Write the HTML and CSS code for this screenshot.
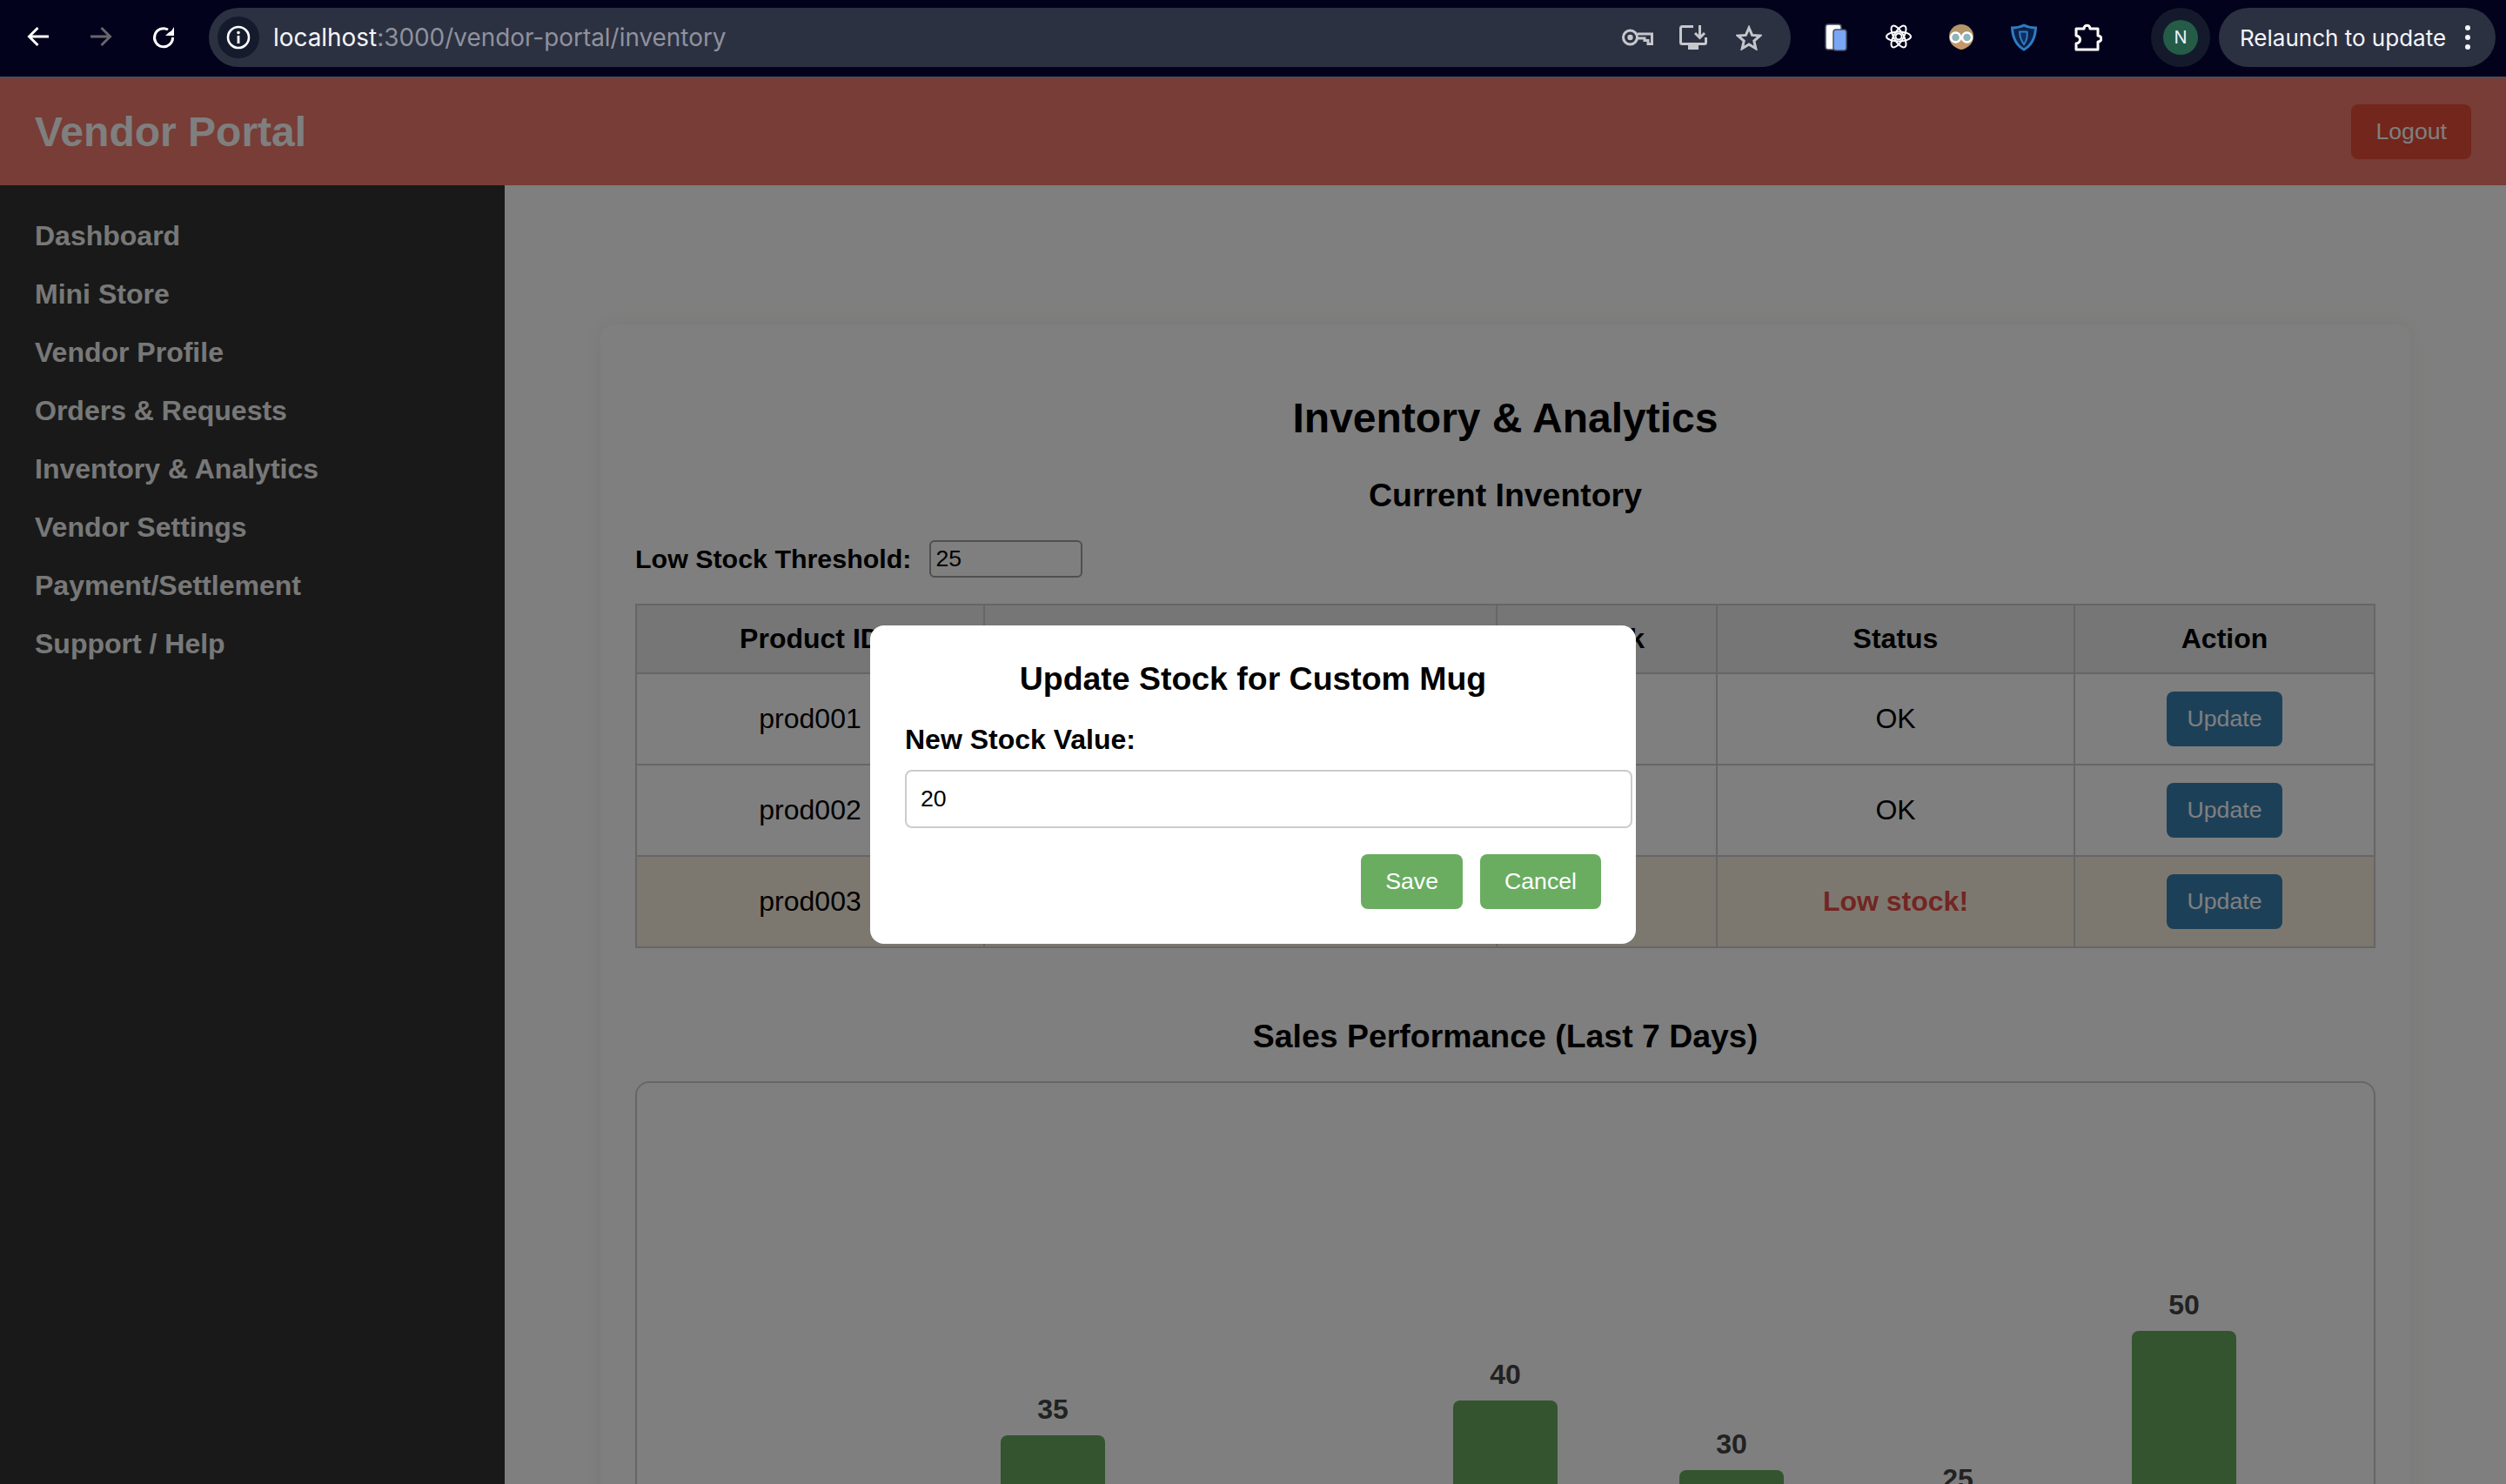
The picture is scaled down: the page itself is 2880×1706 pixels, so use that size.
FILE: index.html
```html
<!DOCTYPE html>
<html lang="en">
<head>
<meta charset="utf-8">
<title>Vendor Portal</title>
<link rel="stylesheet" href="styles.css">
</head>
<body>
<div class="browser-bar">
  <svg class="nav-icon" viewBox="0 0 24 24"><path class="st-white" d="M24 11H1.5M11.5 1L1.5 11L11.5 21"/></svg>
  <svg class="nav-icon" viewBox="0 0 24 24"><path class="st-dim" d="M0 11H22.5M12.5 1L22.5 11L12.5 21"/></svg>
  <svg class="nav-icon" viewBox="0 0 24 24"><path class="st-white" d="M22.5 12A10.5 10.5 0 1 1 17 3"/><path class="fill-white" d="M24 0V10H14L17.5 6.8L21 4.5Z"/></svg>
  <div class="url-bar">
    <span class="info-pill">
      <svg class="info-icon" viewBox="0 0 28 28"><circle class="st-white-thin" cx="14" cy="14" r="12"/><circle class="fill-white" cx="14" cy="8.6" r="1.8"/><rect class="fill-white" x="12.6" y="12" width="2.8" height="9"/></svg>
    </span>
    <span class="url-text"><span class="url-host">localhost</span>:3000/vendor-portal/inventory</span>
    <span class="url-actions">
      <svg class="key-icon" viewBox="0 0 36 20"><circle class="st-gray" cx="9.5" cy="10" r="8"/><circle class="fill-gray" cx="9.5" cy="10" r="3.2"/><path class="st-gray" d="M17.5 6H34.5V17.5H30V13.5H26V11H18"/></svg>
      <svg class="monitor-icon" viewBox="0 0 32 28"><path class="st-gray" d="M16 1.5H3A1.5 1.5 0 0 0 1.500 3V20A1.500 1.500 0 0 0 3 21.500H29A1.500 1.500 0 0 0 30.500 20V14"/><rect class="fill-gray" x="10" y="23" width="12" height="5"/><path class="st-gray" d="M23.500 0V14M18 9L23.500 14.500L29 9"/></svg>
      <svg class="star-icon" viewBox="0 0 30 29"><path class="st-gray" d="M15 3L18.600 11.400L27.500 12.100L20.800 18L22.800 26.700L15 22L7.200 26.700L9.200 18L2.500 12.100L11.400 11.400Z"/></svg>
    </span>
  </div>
  <div class="extensions">
    <svg class="ext" viewBox="0 0 32 32"><rect class="phone-back" x="4" y="1" width="18" height="29" rx="3"/><rect class="phone-front" x="13" y="7" width="15" height="24" rx="3"/></svg>
    <svg class="ext" viewBox="0 0 32 32"><g class="st-atom"><ellipse cx="16" cy="15" rx="14" ry="5.500"/><ellipse cx="16" cy="15" rx="14" ry="5.500" transform="rotate(60 16 15)"/><ellipse cx="16" cy="15" rx="14" ry="5.500" transform="rotate(120 16 15)"/><circle cx="16" cy="15" r="3.500"/></g></svg>
    <svg class="ext" viewBox="0 0 32 32"><circle class="hair" cx="16" cy="15" r="14"/><path class="face" d="M6 16H26C26 25 21 30 16 30C11 30 6 25 6 16Z"/><circle class="lens" cx="9.500" cy="16" r="5.500"/><circle class="lens" cx="22.500" cy="16" r="5.500"/></svg>
    <svg class="ext" viewBox="0 0 32 32"><path class="shield" d="M16 30C7 25 3 16 2.500 5C8 5 12 4 16 2C20 4 24 5 29.500 5C29 16 25 25 16 30Z"/><path class="shield-in" d="M11 9.500H19.500C20.500 15 19 20 16 24C13 20 11 15 11 9.500Z"/></svg>
    <svg class="ext ext-last" viewBox="0 0 32 32"><path class="st-puzzle" d="M2 6H11C11 1 18 1 18 6H27V14C32 14 32 21 27 21V30H2V23C8 22 8 15 2 14Z"/></svg>
  </div>
  <div class="profile-pill"><span class="avatar">N</span></div>
  <div class="relaunch-pill">
    <span class="relaunch-text">Relaunch to update</span>
    <span class="kebab"><i></i><i></i><i></i></span>
  </div>
</div>

<div class="app">
  <header class="top-header">
    <span class="brand">Vendor Portal</span>
    <button class="logout-btn">Logout</button>
  </header>
  <div class="layout">
    <aside class="sidebar">
      <a class="side-link">Dashboard</a>
      <a class="side-link">Mini Store</a>
      <a class="side-link">Vendor Profile</a>
      <a class="side-link">Orders &amp; Requests</a>
      <a class="side-link">Inventory &amp; Analytics</a>
      <a class="side-link">Vendor Settings</a>
      <a class="side-link">Payment/Settlement</a>
      <a class="side-link">Support / Help</a>
    </aside>
    <main class="main">
      <section class="card">
        <h2 class="page-title">Inventory &amp; Analytics</h2>
        <h3 class="section-title">Current Inventory</h3>
        <div class="threshold-row">
          <label class="threshold-label">Low Stock Threshold:</label>
          <input class="threshold-input" type="text" value="25">
        </div>
        <table class="stock-table">
          <colgroup>
            <col class="col-id"><col class="col-name"><col class="col-stock"><col class="col-status"><col class="col-action">
          </colgroup>
          <thead>
            <tr><th>Product ID</th><th>Product Name</th><th>Stock</th><th>Status</th><th>Action</th></tr>
          </thead>
          <tbody>
            <tr><td>prod001</td><td>Custom T-Shirt</td><td>50</td><td>OK</td><td><button class="update-btn">Update</button></td></tr>
            <tr><td>prod002</td><td>Tote Bag</td><td>30</td><td>OK</td><td><button class="update-btn">Update</button></td></tr>
            <tr class="low-row"><td>prod003</td><td>Custom Mug</td><td>20</td><td class="low-text">Low stock!</td><td><button class="update-btn">Update</button></td></tr>
          </tbody>
        </table>
        <h3 class="chart-title">Sales Performance (Last 7 Days)</h3>
        <div class="chart">
          <div class="bar-col"><div class="bar bar-20"></div></div>
          <div class="bar-col"><span class="bar-value">35</span><div class="bar bar-35"></div></div>
          <div class="bar-col"><div class="bar bar-15"></div></div>
          <div class="bar-col"><span class="bar-value">40</span><div class="bar bar-40"></div></div>
          <div class="bar-col"><span class="bar-value">30</span><div class="bar bar-30"></div></div>
          <div class="bar-col"><span class="bar-value">25</span><div class="bar bar-25"></div></div>
          <div class="bar-col"><span class="bar-value">50</span><div class="bar bar-50"></div></div>
        </div>
      </section>
    </main>
  </div>
  <div class="overlay">
    <div class="modal">
      <h3 class="modal-title">Update Stock for Custom Mug</h3>
      <label class="modal-label">New Stock Value:</label>
      <input class="modal-input" type="text" value="20">
      <div class="modal-actions">
        <button class="modal-btn">Save</button>
        <button class="modal-btn">Cancel</button>
      </div>
    </div>
  </div>
</div>
</body>
</html>
```
FILE: styles.css
```css
* { box-sizing: border-box; }
html, body { margin: 0; padding: 0; }
body {
  width: 2880px;
  height: 1706px;
  overflow: hidden;
  background: #000;
  font-family: "Liberation Sans", Arial, sans-serif;
  display: flex;
  flex-direction: column;
}

/* browser chrome */
.browser-bar {
  flex: none;
  height: 90px;
  padding: 0 12px 2px 32px;
  display: flex;
  align-items: center;
  background: #02021c;
  border-bottom: 2px solid #4a4d5a;
  font-family: Inter, "Noto Sans", sans-serif;
}
.nav-icon { width: 24px; height: 24px; margin-right: 48px; flex: none; overflow: visible; }
.nav-icon:nth-of-type(3) { margin-right: 40px; }
.st-white, .st-dim, .st-white-thin, .st-gray, .st-atom, .st-puzzle { fill: none; }
.st-white { stroke: #fff; stroke-width: 3; }
.st-dim { stroke: #66666e; stroke-width: 3; }
.st-white-thin { stroke: #fff; stroke-width: 2.6; }
.st-gray { stroke: #c5c7cb; stroke-width: 3; }
.st-atom { stroke: #fff; stroke-width: 2; }
.st-puzzle { stroke: #fff; stroke-width: 3; stroke-linejoin: round; }
.fill-white { fill: #fff; }
.fill-gray { fill: #c5c7cb; }
.url-bar {
  width: 1818px;
  height: 68px;
  flex: none;
  display: flex;
  align-items: center;
  padding-left: 10px;
  background: #2c3142;
  border-radius: 34px;
}
.info-pill {
  width: 48px;
  height: 48px;
  display: flex;
  align-items: center;
  justify-content: center;
  background: #141b2c;
  border-radius: 50%;
}
.info-icon { width: 28px; height: 28px; }
.url-text { margin-left: 16px; font-size: 27.9px; color: #8f929d; white-space: nowrap; }
.url-host { color: #f5f5f7; }
.url-actions { margin-left: auto; display: flex; align-items: center; }
.key-icon { width: 36px; height: 20px; margin-right: 30px; }
.monitor-icon { width: 32px; height: 28px; margin-right: 33px; }
.star-icon { width: 30px; height: 29px; margin-right: 33px; }
.extensions { margin-left: 36px; display: flex; gap: 40px; flex: none; }
.ext { width: 32px; height: 32px; }
.ext-last { margin-left: 2px; }
.phone-back { fill: #fff; stroke: #4b5063; stroke-width: 1.5; }
.phone-front { fill: #7aa6f6; stroke: #4b5063; stroke-width: 1.5; }
.hair { fill: #b4966c; }
.face { fill: #c8966c; }
.lens { fill: #8db4bb; stroke: #fff; stroke-width: 2.500; }
.shield { fill: #0b2149; stroke: #2f7cc4; stroke-width: 3; }
.shield-in { fill: #0f2f60; stroke: #2f7cc4; stroke-width: 2; }
.profile-pill {
  margin-left: 56px;
  width: 68px;
  height: 68px;
  flex: none;
  display: flex;
  align-items: center;
  justify-content: center;
  background: #141a2b;
  border-radius: 50%;
}
.avatar {
  width: 40px;
  height: 40px;
  display: flex;
  align-items: center;
  justify-content: center;
  border-radius: 50%;
  background: #245c47;
  color: #eef;
  font-size: 20px;
}
.relaunch-pill {
  margin-left: 10px;
  width: 318px;
  height: 68px;
  flex: none;
  display: flex;
  align-items: center;
  padding-left: 24px;
  background: #2c3142;
  border-radius: 34px;
}
.relaunch-text { color: #f5f5f7; font-size: 26px; white-space: nowrap; }
.kebab { margin-left: auto; margin-right: 29px; display: flex; flex-direction: column; gap: 5px; }
.kebab i { display: block; width: 6px; height: 6px; border-radius: 50%; background: #f5f5f7; }

/* app */
.app {
  position: relative;
  flex: 1;
  min-height: 0;
  display: flex;
  flex-direction: column;
  overflow: hidden;
  background: #fff;
}
.top-header {
  flex: none;
  height: 123px;
  padding: 0 40px;
  display: flex;
  align-items: center;
  justify-content: space-between;
  background: #ee7a6c;
}
.brand { font-size: 48px; font-weight: 700; color: #fff; }
.logout-btn {
  padding: 16px 28px;
  border: 0;
  border-radius: 8px;
  background: #e74c37;
  color: #fff;
  font: 26.67px "Liberation Sans", Arial, sans-serif;
}
.layout { flex: 1; min-height: 0; display: flex; }
.sidebar {
  flex: none;
  width: 580px;
  padding: 40px 40px 0;
  display: flex;
  flex-direction: column;
  gap: 30px;
  background: #333;
}
.side-link { font-size: 32px; line-height: 37px; font-weight: 700; color: #f0f0f0; }
.main { flex: 1; min-width: 0; padding-top: 160px; background: #fdfefc; }
.card {
  width: 2080px;
  margin: 0 auto;
  padding: 80px 40px 40px;
  background: #fff;
  border-radius: 16px;
  box-shadow: 0 0 20px rgba(0, 0, 0, 0.06);
}
.page-title {
  margin: 0 0 40px;
  font-size: 48px;
  line-height: 55px;
  text-align: center;
  color: #000;
}
.section-title, .chart-title {
  font-size: 37.44px;
  line-height: 43px;
  text-align: center;
  color: #000;
}
.section-title { margin: 0 0 30px; }
.threshold-row { display: flex; align-items: center; margin-bottom: 30px; }
.threshold-label { font-size: 30.4px; font-weight: 700; color: #000; margin-right: 21px; }
.threshold-input {
  width: 176px;
  height: 43px;
  padding: 4px 5px;
  border: 2px solid #9e9e9e;
  border-radius: 6px;
  background: transparent;
  color: #000;
  font: 26.67px "Liberation Sans", Arial, sans-serif;
}
.stock-table {
  width: 1998px;
  table-layout: fixed;
  border-collapse: collapse;
  font-size: 32px;
  color: #000;
}
.col-id { width: 400px; }
.col-name { width: 589px; }
.col-stock { width: 253px; }
.col-status { width: 411px; }
.col-action { width: 345px; }
.stock-table th, .stock-table td {
  padding: 20px;
  line-height: 37px;
  text-align: center;
  border: 2px solid #ccc;
}
.stock-table th { background: #ececec; font-weight: 700; }
.low-row td { background: #fbf0de; }
.stock-table .low-text { color: #e44c44; font-weight: 700; }
.update-btn {
  display: block;
  margin: 0 auto;
  padding: 16px 24px;
  border: 0;
  border-radius: 8px;
  background: #3a80b2;
  color: #fff;
  font: 26.67px "Liberation Sans", Arial, sans-serif;
}
.chart-title { margin: 80px 0 30px; }
.chart {
  height: 689px;
  border: 2px solid #ccc;
  border-radius: 16px;
  display: flex;
  justify-content: center;
  align-items: flex-end;
  gap: 140px;
  overflow: visible;
}
.bar-col { width: 120px; display: flex; flex-direction: column; align-items: center; }
.bar-value { font-size: 32px; line-height: 37px; margin-bottom: 11px; font-weight: 700; color: #444; }
.bar { width: 120px; border-radius: 8px 8px 0 0; background: #68a85e; }
.bar-15 { height: 120px; }
.bar-20 { height: 160px; }
.bar-25 { height: 200px; }
.bar-30 { height: 240px; }
.bar-35 { height: 280px; }
.bar-40 { height: 320px; }
.bar-50 { height: 400px; }

/* modal */
.overlay {
  position: absolute;
  inset: 0;
  padding-top: 8px;
  display: flex;
  align-items: center;
  justify-content: center;
  background: rgba(0, 0, 0, 0.5);
}
.modal {
  width: 880px;
  padding: 40px;
  background: #fff;
  border-radius: 16px;
}
.modal-title {
  margin: 0 0 30px;
  font-size: 37.44px;
  line-height: 43px;
  text-align: center;
  color: #000;
}
.modal-label {
  display: block;
  margin-bottom: 16px;
  font-size: 32px;
  line-height: 37px;
  font-weight: 700;
  color: #000;
}
.modal-input {
  display: block;
  box-sizing: content-box;
  width: 800px;
  height: 31px;
  padding: 16px;
  border: 2px solid #ccc;
  border-radius: 8px;
  color: #000;
  font: 26.67px "Liberation Sans", Arial, sans-serif;
}
.modal-actions { margin-top: 30px; display: flex; justify-content: flex-end; gap: 20px; }
.modal-btn {
  padding: 16px 28px;
  border: 0;
  border-radius: 8px;
  background: #6aad61;
  color: #fff;
  font: 26.67px "Liberation Sans", Arial, sans-serif;
}
```
